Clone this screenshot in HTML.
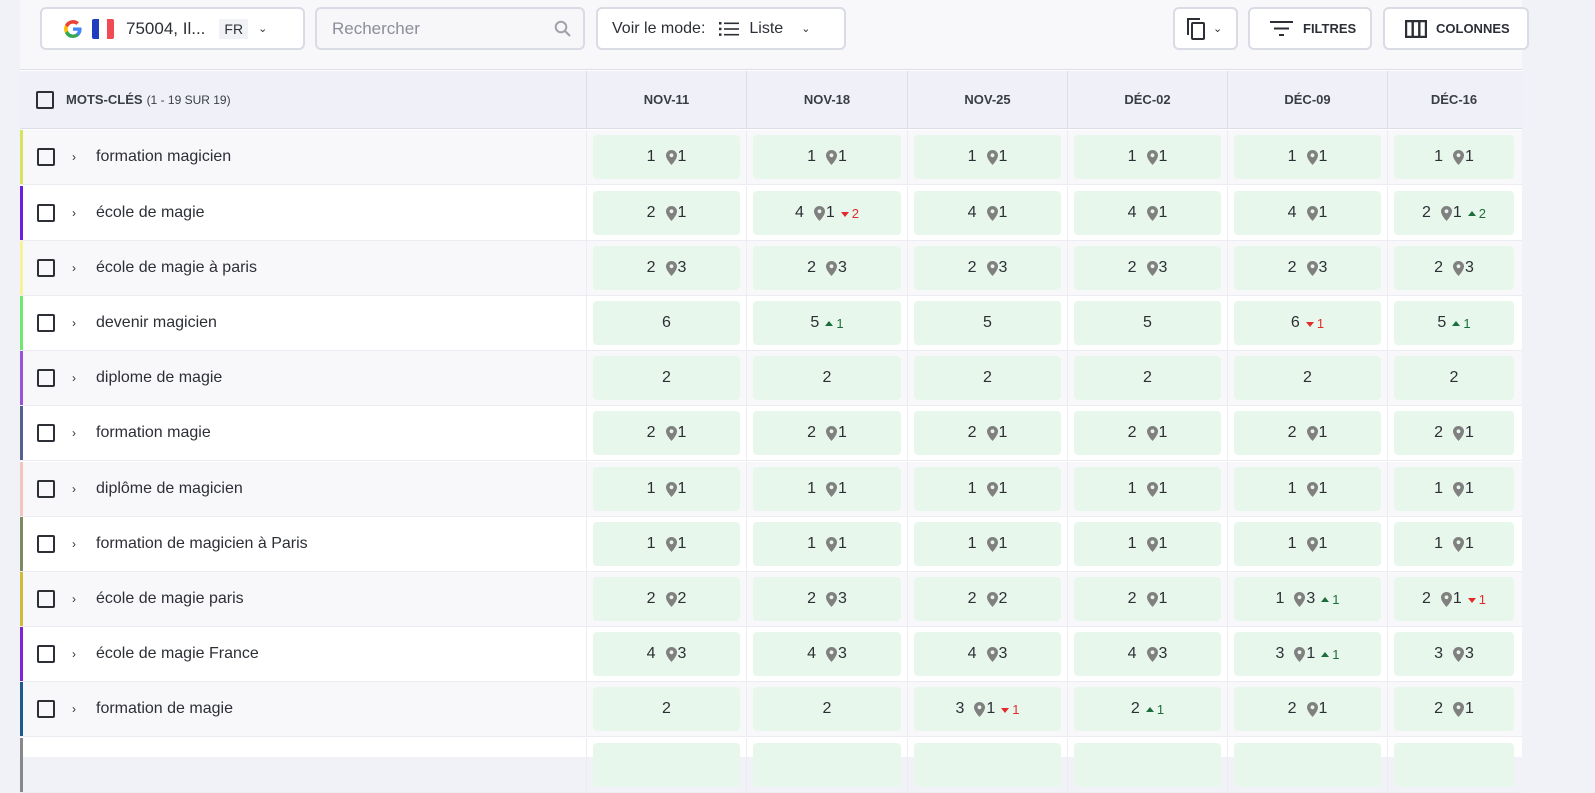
<!DOCTYPE html>
<html><head><meta charset="utf-8"><style>
*{box-sizing:border-box;margin:0;padding:0}
body{width:1595px;height:757px;overflow:hidden;background:#f1f2f7;font-family:"Liberation Sans",sans-serif;color:#2d2f36;position:relative}
.main{position:absolute;left:20px;top:0;width:1502px;height:757px;background:#fff}
.top{position:absolute;left:0;top:0;width:1502px;height:70px;background:#f8f8fb;border-bottom:1px solid #dcdde6}
.btn{position:absolute;top:7px;height:43px;border:2px solid #d9dbe5;border-radius:6px;background:#fff;display:flex;align-items:center;font-size:16px}
.hdr{position:absolute;left:0;top:71px;width:1502px;height:58px;background:#f0f1f8;border-bottom:1px solid #dcdde6;display:flex}
.hdr div{display:flex;align-items:center;justify-content:center;font-size:13px;font-weight:bold;color:#3a3d45;border-right:1px solid #dcdde6}
.row{position:absolute;left:0;width:1502px;height:55px;display:flex;border-bottom:1px solid #ececf2}
.row.o{background:#f8f8fb}
.kw{width:567px;display:flex;align-items:center;font-size:16px;border-right:1px solid #ececf2;border-left:3px solid #888}
.cb{width:18px;height:18px;border:2px solid #2d2f36;border-radius:2px;margin-left:14px}
.ch{margin-left:17px;margin-right:16px;font-size:12px;width:8px}
.c{width:160px;padding:5px 6px;border-right:1px solid #ececf2}
.c.w{width:161px}.c.l{width:132px;border:none}
.b{height:100%;background:#e8f7ec;border-radius:4px;display:flex;align-items:center;justify-content:center;font-size:16px;color:#2d2f36}
.p{display:inline-block;width:11px;height:15px;margin:0 1px 0 10px;vertical-align:-1px}
.u{color:#1b6e3c;font-size:13px;margin-left:6px}.u:before{content:"";display:inline-block;border:4px solid transparent;border-bottom:5px solid #1b6e3c;border-top:0;margin-right:3px;vertical-align:2px}
.d{color:#e32b2b;font-size:13px;margin-left:6px}.d:before{content:"";display:inline-block;border:4px solid transparent;border-top:5px solid #e32b2b;border-bottom:0;margin-right:3px;vertical-align:1px}
</style></head><body>
<svg width="0" height="0" style="position:absolute"><defs><symbol id="pin" viewBox="0 0 11 15"><path d="M5.5 0C2.5 0 0 2.4 0 5.4 0 9.3 5.5 15 5.5 15S11 9.3 11 5.4C11 2.4 8.5 0 5.5 0z" fill="#808080"/><circle cx="5.5" cy="5.3" r="1.9" fill="#e8f7ec"/></symbol></defs></svg>
<div class="main">
<div class="top">
 <div class="btn" style="left:20px;width:265px">
  <svg style="margin-left:22px" width="18" height="18" viewBox="0 0 18 18"><path d="M17.6 9.2c0-.6-.1-1.2-.2-1.7H9v3.3h4.8a4.1 4.1 0 0 1-1.8 2.7v2.2h2.9c1.7-1.6 2.7-3.9 2.7-6.5z" fill="#4285F4"/><path d="M9 18c2.4 0 4.5-.8 5.9-2.2L12 13.6c-.8.5-1.8.9-3 .9-2.3 0-4.3-1.6-5-3.7H1v2.3A9 9 0 0 0 9 18z" fill="#34A853"/><path d="M4 10.7a5.4 5.4 0 0 1 0-3.4V5H1a9 9 0 0 0 0 8z" fill="#FBBC05"/><path d="M9 3.6c1.3 0 2.5.5 3.4 1.3l2.6-2.6A9 9 0 0 0 1 5l3 2.3c.7-2.1 2.7-3.7 5-3.7z" fill="#EA4335"/></svg>
  <div style="margin-left:10px;width:22px;height:20px;display:flex;border-radius:2px;overflow:hidden"><i style="flex:1;background:#1d3fbf"></i><i style="flex:1;background:#fff"></i><i style="flex:1;background:#f04a55"></i></div>
  <span style="margin-left:12px;font-size:17px">75004, Il...</span>
  <span style="margin-left:14px;background:#f1f2f6;font-size:14px;padding:2px 5px">FR</span>
  <span style="margin-left:10px;font-size:11px">&#8964;</span>
 </div>
 <div class="btn" style="left:295px;width:270px;background:#f7f7fa;color:#8b8e98;font-size:17px"><span style="margin-left:15px">Rechercher</span>
  <svg style="position:absolute;right:12px" width="17" height="17" viewBox="0 0 17 17"><circle cx="7" cy="7" r="5.3" stroke="#a0a3ab" stroke-width="2" fill="none"/><path d="M11 11l5 5" stroke="#a0a3ab" stroke-width="2.2"/></svg></div>
 <div class="btn" style="left:576px;width:250px"><span style="margin-left:14px">Voir le mode:</span>
  <svg style="margin-left:14px" width="20" height="14" viewBox="0 0 20 14"><g fill="#2d2f36"><rect x="0" y="0" width="2.5" height="2.5"/><rect x="0" y="5.7" width="2.5" height="2.5"/><rect x="0" y="11.4" width="2.5" height="2.5"/><rect x="5" y="0.5" width="15" height="1.6"/><rect x="5" y="6.2" width="15" height="1.6"/><rect x="5" y="11.9" width="15" height="1.6"/></g></svg>
  <span style="margin-left:10px">Liste</span><span style="margin-left:18px;font-size:11px">&#8964;</span></div>
 <div class="btn" style="left:1153px;width:65px"><svg style="margin-left:12px" width="20" height="22" viewBox="0 0 20 22"><path d="M1 17V1h12" stroke="#2d2f36" stroke-width="2" fill="none"/><rect x="5" y="5" width="12" height="16" rx="1" stroke="#2d2f36" stroke-width="2" fill="none"/></svg><span style="margin-left:6px;font-size:11px">&#8964;</span></div>
 <div class="btn" style="left:1228px;width:124px;font-size:13px;font-weight:bold"><svg style="margin-left:20px" width="23" height="16" viewBox="0 0 23 16"><g fill="#2d2f36"><rect x="0" y="0" width="23" height="2"/><rect x="4" y="6.5" width="15" height="2"/><rect x="9" y="13" width="5" height="2"/></g></svg><span style="margin-left:10px">FILTRES</span></div>
 <div class="btn" style="left:1363px;width:146px;font-size:13px;font-weight:bold"><svg style="margin-left:20px" width="22" height="18" viewBox="0 0 22 18"><path d="M1 1h20v16H1zM7.7 1v16M14.3 1v16" stroke="#2d2f36" stroke-width="2.4" fill="none"/></svg><span style="margin-left:9px">COLONNES</span></div>
</div>
<div class="hdr">
 <div style="width:567px;justify-content:flex-start"><span class="cb" style="margin-left:16px"></span><span style="margin-left:12px">MOTS-CLÉS</span><span style="font-weight:normal;margin-left:4px;font-size:12px">(1 - 19 SUR 19)</span></div>
 <div style="width:160px">NOV-11</div><div style="width:161px">NOV-18</div><div style="width:160px">NOV-25</div><div style="width:160px">DÉC-02</div><div style="width:160px">DÉC-09</div><div style="width:132px;border:none">DÉC-16</div>
</div>

<div class="row o" style="top:130px"><div class="kw" style="border-left-color:#d7e35c"><span class="cb"></span><span class="ch">›</span>formation magicien</div>
<div class="c"><div class="b">1<svg class="p"><use href="#pin"/></svg>1</div></div><div class="c w"><div class="b">1<svg class="p"><use href="#pin"/></svg>1</div></div><div class="c"><div class="b">1<svg class="p"><use href="#pin"/></svg>1</div></div><div class="c"><div class="b">1<svg class="p"><use href="#pin"/></svg>1</div></div><div class="c"><div class="b">1<svg class="p"><use href="#pin"/></svg>1</div></div><div class="c l"><div class="b">1<svg class="p"><use href="#pin"/></svg>1</div></div></div>

<div class="row" style="top:186px"><div class="kw" style="border-left-color:#6a1fe0"><span class="cb"></span><span class="ch">›</span>école de magie</div>
<div class="c"><div class="b">2<svg class="p"><use href="#pin"/></svg>1</div></div><div class="c w"><div class="b">4<svg class="p"><use href="#pin"/></svg>1<span class="d">2</span></div></div><div class="c"><div class="b">4<svg class="p"><use href="#pin"/></svg>1</div></div><div class="c"><div class="b">4<svg class="p"><use href="#pin"/></svg>1</div></div><div class="c"><div class="b">4<svg class="p"><use href="#pin"/></svg>1</div></div><div class="c l"><div class="b">2<svg class="p"><use href="#pin"/></svg>1<span class="u">2</span></div></div></div>

<div class="row o" style="top:241px"><div class="kw" style="border-left-color:#f7f29a"><span class="cb"></span><span class="ch">›</span>école de magie à paris</div>
<div class="c"><div class="b">2<svg class="p"><use href="#pin"/></svg>3</div></div><div class="c w"><div class="b">2<svg class="p"><use href="#pin"/></svg>3</div></div><div class="c"><div class="b">2<svg class="p"><use href="#pin"/></svg>3</div></div><div class="c"><div class="b">2<svg class="p"><use href="#pin"/></svg>3</div></div><div class="c"><div class="b">2<svg class="p"><use href="#pin"/></svg>3</div></div><div class="c l"><div class="b">2<svg class="p"><use href="#pin"/></svg>3</div></div></div>

<div class="row" style="top:296px"><div class="kw" style="border-left-color:#6fe86f"><span class="cb"></span><span class="ch">›</span>devenir magicien</div>
<div class="c"><div class="b">6</div></div><div class="c w"><div class="b">5<span class="u">1</span></div></div><div class="c"><div class="b">5</div></div><div class="c"><div class="b">5</div></div><div class="c"><div class="b">6<span class="d">1</span></div></div><div class="c l"><div class="b">5<span class="u">1</span></div></div></div>

<div class="row o" style="top:351px"><div class="kw" style="border-left-color:#9a52d8"><span class="cb"></span><span class="ch">›</span>diplome de magie</div>
<div class="c"><div class="b">2</div></div><div class="c w"><div class="b">2</div></div><div class="c"><div class="b">2</div></div><div class="c"><div class="b">2</div></div><div class="c"><div class="b">2</div></div><div class="c l"><div class="b">2</div></div></div>

<div class="row" style="top:406px"><div class="kw" style="border-left-color:#56608f"><span class="cb"></span><span class="ch">›</span>formation magie</div>
<div class="c"><div class="b">2<svg class="p"><use href="#pin"/></svg>1</div></div><div class="c w"><div class="b">2<svg class="p"><use href="#pin"/></svg>1</div></div><div class="c"><div class="b">2<svg class="p"><use href="#pin"/></svg>1</div></div><div class="c"><div class="b">2<svg class="p"><use href="#pin"/></svg>1</div></div><div class="c"><div class="b">2<svg class="p"><use href="#pin"/></svg>1</div></div><div class="c l"><div class="b">2<svg class="p"><use href="#pin"/></svg>1</div></div></div>

<div class="row o" style="top:462px"><div class="kw" style="border-left-color:#f4c4c0"><span class="cb"></span><span class="ch">›</span>diplôme de magicien</div>
<div class="c"><div class="b">1<svg class="p"><use href="#pin"/></svg>1</div></div><div class="c w"><div class="b">1<svg class="p"><use href="#pin"/></svg>1</div></div><div class="c"><div class="b">1<svg class="p"><use href="#pin"/></svg>1</div></div><div class="c"><div class="b">1<svg class="p"><use href="#pin"/></svg>1</div></div><div class="c"><div class="b">1<svg class="p"><use href="#pin"/></svg>1</div></div><div class="c l"><div class="b">1<svg class="p"><use href="#pin"/></svg>1</div></div></div>

<div class="row" style="top:517px"><div class="kw" style="border-left-color:#7d8a5e"><span class="cb"></span><span class="ch">›</span>formation de magicien à Paris</div>
<div class="c"><div class="b">1<svg class="p"><use href="#pin"/></svg>1</div></div><div class="c w"><div class="b">1<svg class="p"><use href="#pin"/></svg>1</div></div><div class="c"><div class="b">1<svg class="p"><use href="#pin"/></svg>1</div></div><div class="c"><div class="b">1<svg class="p"><use href="#pin"/></svg>1</div></div><div class="c"><div class="b">1<svg class="p"><use href="#pin"/></svg>1</div></div><div class="c l"><div class="b">1<svg class="p"><use href="#pin"/></svg>1</div></div></div>

<div class="row o" style="top:572px"><div class="kw" style="border-left-color:#cdbb3a"><span class="cb"></span><span class="ch">›</span>école de magie paris</div>
<div class="c"><div class="b">2<svg class="p"><use href="#pin"/></svg>2</div></div><div class="c w"><div class="b">2<svg class="p"><use href="#pin"/></svg>3</div></div><div class="c"><div class="b">2<svg class="p"><use href="#pin"/></svg>2</div></div><div class="c"><div class="b">2<svg class="p"><use href="#pin"/></svg>1</div></div><div class="c"><div class="b">1<svg class="p"><use href="#pin"/></svg>3<span class="u">1</span></div></div><div class="c l"><div class="b">2<svg class="p"><use href="#pin"/></svg>1<span class="d">1</span></div></div></div>

<div class="row" style="top:627px"><div class="kw" style="border-left-color:#7c25d0"><span class="cb"></span><span class="ch">›</span>école de magie France</div>
<div class="c"><div class="b">4<svg class="p"><use href="#pin"/></svg>3</div></div><div class="c w"><div class="b">4<svg class="p"><use href="#pin"/></svg>3</div></div><div class="c"><div class="b">4<svg class="p"><use href="#pin"/></svg>3</div></div><div class="c"><div class="b">4<svg class="p"><use href="#pin"/></svg>3</div></div><div class="c"><div class="b">3<svg class="p"><use href="#pin"/></svg>1<span class="u">1</span></div></div><div class="c l"><div class="b">3<svg class="p"><use href="#pin"/></svg>3</div></div></div>

<div class="row o" style="top:682px"><div class="kw" style="border-left-color:#1f5a8e"><span class="cb"></span><span class="ch">›</span>formation de magie</div>
<div class="c"><div class="b">2</div></div><div class="c w"><div class="b">2</div></div><div class="c"><div class="b">3<svg class="p"><use href="#pin"/></svg>1<span class="d">1</span></div></div><div class="c"><div class="b">2<span class="u">1</span></div></div><div class="c"><div class="b">2<svg class="p"><use href="#pin"/></svg>1</div></div><div class="c l"><div class="b">2<svg class="p"><use href="#pin"/></svg>1</div></div></div>

<div class="row" style="top:738px"><div class="kw" style="border-left-color:#888"></div>
<div class="c"><div class="b"></div></div><div class="c w"><div class="b"></div></div><div class="c"><div class="b"></div></div><div class="c"><div class="b"></div></div><div class="c"><div class="b"></div></div><div class="c l"><div class="b"></div></div></div>
</div>
</body></html>
